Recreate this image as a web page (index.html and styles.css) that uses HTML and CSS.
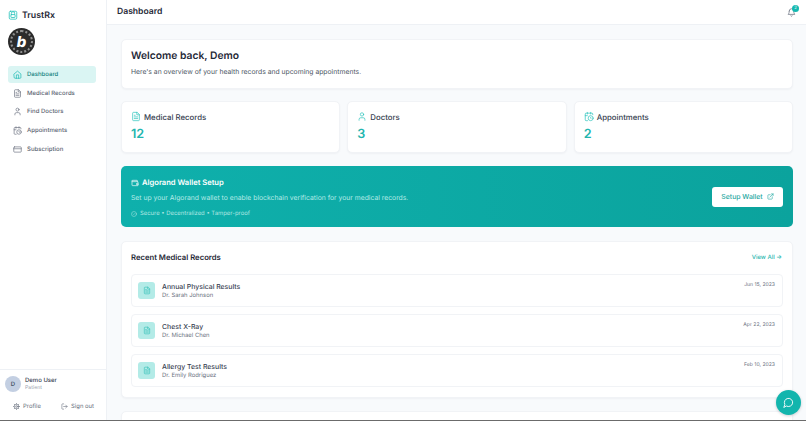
FILE: index.html
```html
<!DOCTYPE html>
<html lang="en">
<head>
  <meta charset="UTF-8">
  <meta name="viewport" content="width=device-width, initial-scale=1.0">
  <title>TrustRx | Dashboard</title>
  <link rel="stylesheet" href="styles.css">
</head>
<body>
  <svg class="icon-defs" width="0" height="0">
    <symbol id="i-file" viewBox="0 0 24 24"><path d="M14 2H6a2 2 0 0 0-2 2v16a2 2 0 0 0 2 2h12a2 2 0 0 0 2-2V8z"/><path d="M14 2v6h6"/><path d="M16 13H8"/><path d="M16 17H8"/><path d="M10 9H8"/></symbol>
    <symbol id="i-user" viewBox="0 0 24 24"><path d="M19 21v-2a4 4 0 0 0-4-4H9a4 4 0 0 0-4 4v2"/><circle cx="12" cy="7" r="4"/></symbol>
    <symbol id="i-cal" viewBox="0 0 24 24"><path d="M21 7.5V6a2 2 0 0 0-2-2H5a2 2 0 0 0-2 2v14a2 2 0 0 0 2 2h3.5"/><path d="M16 2v4"/><path d="M8 2v4"/><path d="M3 10h5"/><circle cx="16" cy="16" r="6"/><path d="M16 14v2l1 1"/></symbol>
  </svg>

  <div class="app">
    <aside class="sidebar">
      <div class="brand">
        <svg class="brand-icon" viewBox="0 0 24 24"><rect x="3" y="3" width="18" height="19" rx="3"/><path d="M8 11V8a4 4 0 0 1 8 0v3"/><rect x="7" y="11" width="10" height="7" rx="1"/></svg>
        <span class="brand-name">TrustRx</span>
      </div>
      <div class="badge-logo"><span>b</span></div>

      <nav class="nav">
        <a class="nav-item active">
          <svg class="nav-icon" viewBox="0 0 24 24"><path d="M3 10.5 12 3l9 7.5V20a2 2 0 0 1-2 2H5a2 2 0 0 1-2-2z"/><path d="M9 22v-9h6v9"/></svg>
          Dashboard
        </a>
        <a class="nav-item"><svg class="nav-icon"><use href="#i-file"/></svg>Medical Records</a>
        <a class="nav-item"><svg class="nav-icon"><use href="#i-user"/></svg>Find Doctors</a>
        <a class="nav-item"><svg class="nav-icon"><use href="#i-cal"/></svg>Appointments</a>
        <a class="nav-item">
          <svg class="nav-icon" viewBox="0 0 24 24"><rect x="2" y="5" width="20" height="14" rx="2"/><path d="M2 10h20"/></svg>
          Subscription
        </a>
      </nav>

      <div class="side-footer">
        <div class="user-row">
          <div class="avatar">D</div>
          <div>
            <div class="user-name">Demo User</div>
            <div class="user-role">Patient</div>
          </div>
        </div>
        <div class="user-actions">
          <a class="user-action">
            <svg class="action-icon" viewBox="0 0 24 24"><circle cx="12" cy="12" r="3"/><circle cx="12" cy="12" r="8"/><path d="M12 1v3M12 20v3M1 12h3M20 12h3M4.2 4.2l2.2 2.2M17.6 17.6l2.2 2.2M4.2 19.8l2.2-2.2M17.6 6.4l2.2-2.2"/></svg>
            Profile
          </a>
          <a class="user-action">
            <svg class="action-icon" viewBox="0 0 24 24"><path d="M9 21H5a2 2 0 0 1-2-2V5a2 2 0 0 1 2-2h4"/><path d="m16 17 5-5-5-5"/><path d="M21 12H9"/></svg>
            Sign out
          </a>
        </div>
      </div>
    </aside>

    <div class="main">
      <header class="topbar">
        <h1 class="page-title">Dashboard</h1>
        <div class="bell">
          <svg class="bell-icon" viewBox="0 0 24 24"><path d="M6 8a6 6 0 0 1 12 0c0 7 3 9 3 9H3s3-2 3-9"/><path d="M10.3 21a1.9 1.9 0 0 0 3.4 0"/></svg>
          <span class="bell-count">2</span>
        </div>
      </header>

      <div class="content">
        <section class="card welcome">
          <h2 class="welcome-title">Welcome back, Demo</h2>
          <p class="welcome-text">Here's an overview of your health records and upcoming appointments.</p>
        </section>

        <section class="stats">
          <div class="card stat">
            <div class="stat-label"><svg class="stat-icon"><use href="#i-file"/></svg>Medical Records</div>
            <div class="stat-value">12</div>
          </div>
          <div class="card stat">
            <div class="stat-label"><svg class="stat-icon"><use href="#i-user"/></svg>Doctors</div>
            <div class="stat-value">3</div>
          </div>
          <div class="card stat">
            <div class="stat-label"><svg class="stat-icon"><use href="#i-cal"/></svg>Appointments</div>
            <div class="stat-value">2</div>
          </div>
        </section>

        <section class="wallet">
          <div class="wallet-info">
            <div class="wallet-title">
              <svg class="wallet-icon" viewBox="0 0 24 24"><path d="M19 7V5a1 1 0 0 0-1-1H5a2 2 0 0 0 0 4h15a1 1 0 0 1 1 1v4h-3a2 2 0 0 0 0 4h3a1 1 0 0 0 1-1v-2"/><path d="M3 6v12a2 2 0 0 0 2 2h15a1 1 0 0 0 1-1v-2"/></svg>
              Algorand Wallet Setup
            </div>
            <p class="wallet-text">Set up your Algorand wallet to enable blockchain verification for your medical records.</p>
            <div class="wallet-note">
              <svg class="note-icon" viewBox="0 0 24 24"><circle cx="12" cy="12" r="10"/><path d="m9 12 2 2 4-4"/></svg>
              Secure • Decentralized • Tamper-proof
            </div>
          </div>
          <a class="wallet-btn">
            Setup Wallet
            <svg class="btn-icon" viewBox="0 0 24 24"><path d="M18 13v6a2 2 0 0 1-2 2H5a2 2 0 0 1-2-2V8a2 2 0 0 1 2-2h6"/><path d="M15 3h6v6"/><path d="M10 14 21 3"/></svg>
          </a>
        </section>

        <section class="card records">
          <div class="records-head">
            <h3 class="records-title">Recent Medical Records</h3>
            <a class="view-all">View All →</a>
          </div>
          <div class="record">
            <div class="record-thumb"><svg class="thumb-icon"><use href="#i-file"/></svg></div>
            <div class="record-body">
              <div class="record-name">Annual Physical Results</div>
              <div class="record-doc">Dr. Sarah Johnson</div>
            </div>
            <div class="record-date">Jun 15, 2023</div>
          </div>
          <div class="record">
            <div class="record-thumb"><svg class="thumb-icon"><use href="#i-file"/></svg></div>
            <div class="record-body">
              <div class="record-name">Chest X-Ray</div>
              <div class="record-doc">Dr. Michael Chen</div>
            </div>
            <div class="record-date">Apr 22, 2023</div>
          </div>
          <div class="record">
            <div class="record-thumb"><svg class="thumb-icon"><use href="#i-file"/></svg></div>
            <div class="record-body">
              <div class="record-name">Allergy Test Results</div>
              <div class="record-doc">Dr. Emily Rodriguez</div>
            </div>
            <div class="record-date">Feb 10, 2023</div>
          </div>
        </section>

        <section class="card next-card"></section>
      </div>
    </div>
  </div>

  <button class="chat-btn">
    <svg class="chat-icon" viewBox="0 0 24 24"><path d="M7.9 20A9 9 0 1 0 4 16.1L2 22z"/></svg>
  </button>
</body>
</html>
```

FILE: styles.css
```css
* {
  margin: 0;
  padding: 0;
  box-sizing: border-box;
}

html, body {
  height: 100%;
  overflow: hidden;
}

body {
  font-family: 'Inter', 'Liberation Sans', sans-serif;
  background: #f8fafc;
  color: #1f2937;
  text-rendering: geometricPrecision;
}

svg {
  fill: none;
  stroke: currentColor;
  stroke-width: 2;
  stroke-linecap: round;
  stroke-linejoin: round;
  flex-shrink: 0;
}

.icon-defs {
  position: absolute;
}

.app {
  display: flex;
  height: 420px;
}

/* sidebar */
.sidebar {
  width: 107px;
  flex-shrink: 0;
  display: flex;
  flex-direction: column;
  background: #fff;
  border-right: 1px solid #eef1f5;
}

.brand {
  display: flex;
  align-items: center;
  gap: 4px;
  padding: 9px 8px 0;
  height: 21px;
}

.brand-icon {
  width: 10px;
  height: 12px;
  color: #2cc4bc;
}

.brand-name {
  font-size: 8.8px;
  font-weight: 600;
  color: #1f2937;
}

.badge-logo {
  position: relative;
  width: 27px;
  height: 27px;
  margin: 7px 0 0 8px;
  border-radius: 50%;
  background: #2b2b2b;
  display: flex;
  align-items: center;
  justify-content: center;
}

.badge-logo::before {
  content: "";
  position: absolute;
  inset: 2px;
  border-radius: 50%;
  border: 2px dotted #8f8f8f;
}

.badge-logo span {
  color: #fff;
  font-size: 15px;
  font-weight: 800;
  font-style: italic;
  line-height: 1;
}

.nav {
  display: flex;
  flex-direction: column;
  padding: 11px 10px 0 8px;
}

.nav-item {
  display: flex;
  align-items: center;
  gap: 5px;
  height: 17px;
  padding-left: 5px;
  border-radius: 3px;
  font-size: 6px;
  font-weight: 500;
  color: #5b6472;
  margin-bottom: 1.7px;
}

.nav-item.active {
  background: #daf5f3;
  color: #16837f;
}

.nav-icon {
  width: 9px;
  height: 9px;
  color: #6b7280;
  stroke-width: 1.8;
}

.active .nav-icon {
  color: #14b8b0;
}

.side-footer {
  margin-top: auto;
  border-top: 1px solid #eef1f5;
  padding: 6px 5px 0;
  height: 51px;
}

.user-row {
  display: flex;
  align-items: center;
  gap: 4px;
}

.avatar {
  width: 16px;
  height: 16px;
  border-radius: 50%;
  background: #c3cfe2;
  color: #475569;
  font-size: 6px;
  font-weight: 600;
  display: flex;
  align-items: center;
  justify-content: center;
}

.user-name {
  font-size: 6px;
  font-weight: 500;
  color: #374151;
}

.user-role {
  font-size: 5.2px;
  color: #9ca3af;
  margin-top: 1px;
}

.user-actions {
  display: flex;
  justify-content: space-between;
  padding: 11px 7px 0 8px;
}

.user-action {
  display: flex;
  align-items: center;
  gap: 3px;
  font-size: 5.9px;
  color: #6b7280;
}

.action-icon {
  width: 7px;
  height: 7px;
}

/* main column */
.main {
  flex: 1;
  min-width: 0;
  display: flex;
  flex-direction: column;
}

.topbar {
  height: 25px;
  flex-shrink: 0;
  display: flex;
  align-items: center;
  justify-content: space-between;
  padding: 0 7px 0 10px;
  background: #fff;
  border-bottom: 1px solid #eef1f5;
}

.page-title {
  font-size: 8.6px;
  font-weight: 600;
  color: #1f2937;
}

.bell {
  position: relative;
  width: 12px;
  height: 12px;
}

.bell-icon {
  display: block;
  width: 9px;
  height: 9px;
  margin-top: 2px;
  color: #6b7280;
}

.bell-count {
  position: absolute;
  top: -1px;
  right: 0;
  width: 7px;
  height: 7px;
  border-radius: 50%;
  background: #14b8b0;
  color: #fff;
  font-size: 4.5px;
  line-height: 7px;
  text-align: center;
}

.content {
  flex: 1;
  overflow: hidden;
  padding: 14px 13px 0 14px;
  display: flex;
  flex-direction: column;
}

.card {
  flex-shrink: 0;
  background: #fff;
  border: 1px solid #f1f3f6;
  border-radius: 5px;
  box-shadow: 0 1px 2px rgba(15, 23, 42, 0.04);
}

.welcome {
  height: 50px;
  padding: 10px 9px 0;
}

.welcome-title {
  font-size: 10.3px;
  font-weight: 600;
  color: #1f2937;
}

.welcome-text {
  font-size: 6.8px;
  color: #4b5563;
  margin-top: 5px;
}

/* stat cards */
.stats {
  display: grid;
  grid-template-columns: repeat(3, 1fr);
  gap: 7px;
  margin-top: 12px;
}

.stat {
  height: 52px;
  padding: 9px 9px 0;
}

.stat-label {
  display: flex;
  align-items: center;
  gap: 3px;
  font-size: 7.8px;
  font-weight: 500;
  color: #374151;
}

.stat-icon {
  width: 10px;
  height: 11px;
  color: #2cc4bc;
  stroke-width: 1.7;
}

.stat-value {
  font-size: 12.6px;
  font-weight: 600;
  color: #22b5ae;
  margin-top: 5px;
}

/* wallet banner */
.wallet {
  flex-shrink: 0;
  height: 61px;
  margin-top: 13px;
  padding: 0 10px;
  display: flex;
  align-items: center;
  justify-content: space-between;
  border-radius: 5px;
  background: linear-gradient(90deg, #0fb0ac, #0ba39d);
  color: #fff;
}

.wallet-info {
  padding-top: 2px;
}

.wallet-title {
  display: flex;
  align-items: center;
  gap: 3px;
  font-size: 7.6px;
  font-weight: 600;
}

.wallet-icon {
  width: 8px;
  height: 8px;
}

.wallet-text {
  font-size: 6.8px;
  color: #b5ebe7;
  margin-top: 6px;
}

.wallet-note {
  display: flex;
  align-items: center;
  gap: 3px;
  font-size: 5.9px;
  color: #aee6e2;
  margin-top: 8px;
}

.note-icon {
  width: 6px;
  height: 6px;
}

.wallet-btn {
  width: 71px;
  height: 20px;
  display: flex;
  align-items: center;
  justify-content: center;
  gap: 4px;
  background: #fff;
  border-radius: 3px;
  font-size: 6.9px;
  font-weight: 500;
  color: #1fa8a2;
}

.btn-icon {
  width: 7px;
  height: 7px;
}

/* records */
.records {
  height: 157px;
  margin-top: 14px;
  padding: 0 9px;
}

.records-head {
  display: flex;
  align-items: center;
  justify-content: space-between;
  height: 32px;
  padding: 0 1px 1px 0;
}

.records-title {
  font-size: 7.7px;
  font-weight: 600;
  color: #1f2937;
}

.view-all {
  font-size: 6px;
  font-weight: 500;
  color: #2cb8b1;
}

.record {
  display: flex;
  align-items: center;
  height: 33px;
  margin-bottom: 7px;
  padding: 0 7px 0 6px;
  border: 1px solid #f1f3f6;
  border-radius: 4px;
}

.record-thumb {
  width: 17px;
  height: 17px;
  border-radius: 3px;
  background: #b3ebe7;
  display: flex;
  align-items: center;
  justify-content: center;
  color: #3cc2bb;
}

.thumb-icon {
  width: 8px;
  height: 9px;
}

.record-body {
  flex: 1;
  margin-left: 7px;
}

.record-name {
  font-size: 6.9px;
  font-weight: 500;
  color: #374151;
}

.record-doc {
  font-size: 5.9px;
  color: #6b7280;
  margin-top: 1.5px;
}

.record-date {
  align-self: flex-start;
  margin-top: 7px;
  font-size: 5.1px;
  color: #6b7280;
}

.next-card {
  height: 40px;
  margin-top: 13px;
}

/* chat */
.chat-btn {
  position: fixed;
  right: 5px;
  bottom: 6px;
  width: 25px;
  height: 25px;
  border: 0;
  border-radius: 50%;
  background: #12b5ad;
  color: #fff;
  display: flex;
  align-items: center;
  justify-content: center;
  box-shadow: 0 1px 3px rgba(15, 23, 42, 0.2);
}

.chat-icon {
  width: 11px;
  height: 11px;
}

body::after {
  content: "";
  position: fixed;
  left: 0;
  right: 0;
  bottom: 0;
  height: 1px;
  background: #6b6b6b;
}
```
